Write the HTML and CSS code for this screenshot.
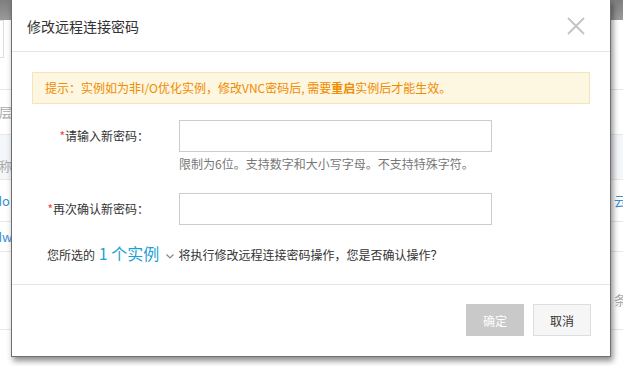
FILE: index.html
```html
<!DOCTYPE html>
<html>
<head lang="zh-CN">
    <meta charset="UTF-8">
    <title>修改远程连接密码</title>
    <link rel="stylesheet" href="styles.css">
</head>
<body>
<div class="page">
    <div class="topbar"></div>
    <div class="toolbar"><div class="searchbox"></div></div>
    <div class="row r1"><span class="cell gray">制层</span></div>
    <div class="row thead"><span class="cell gray">名称</span></div>
    <div class="row r3"><span class="cell blue">odo</span><span class="cell-r blue">云</span></div>
    <div class="row r4"><span class="cell blue">odw</span></div>
    <div class="row r5"><span class="cell-r gray">条</span></div>
</div>

<div class="modal">
    <div class="modal-hd">
        <h3 class="modal-title">修改远程连接密码</h3>
        <svg class="close" width="18" height="18" viewBox="0 0 18 18">
            <path d="M1 1L17 17M17 1L1 17" stroke="#c4c4c4" stroke-width="2" fill="none"/>
        </svg>
    </div>
    <div class="modal-bd">
        <div class="alert">提示：实例如为非I/O优化实例，修改VNC密码后, 需要<b>重启</b>实例后才能生效。</div>
        <div class="frow">
            <label class="flabel" for="pwd"><i>*</i>请输入新密码：</label>
            <input class="finput" type="password" id="pwd"/>
            <p class="fhelp">限制为6位。支持数字和大小写字母。不支持特殊字符。</p>
        </div>
        <div class="frow frow2">
            <label class="flabel" for="pwd2"><i>*</i>再次确认新密码：</label>
            <input class="finput" type="password" id="pwd2"/>
        </div>
        <p class="confirm">您所选的 <a class="num">1 个实例</a>
            <svg class="arrow" width="8" height="5" viewBox="0 0 8 5"><path d="M0.5 0.5L4 4L7.5 0.5" stroke="#888" stroke-width="1.2" fill="none"/></svg>
            将执行修改远程连接密码操作，您是否确认操作？</p>
    </div>
    <div class="modal-ft">
        <button class="btn btn-ok">确定</button>
        <button class="btn btn-cancel">取消</button>
    </div>
</div>
</body>
</html>
```

FILE: styles.css
```css
*{margin:0;padding:0;box-sizing:border-box;}
body{width:623px;height:366px;overflow:hidden;position:relative;background:#fff;color:#333;font:12px/16px "Noto Sans CJK SC","Liberation Sans",sans-serif;}

/* 背景页面 */
.page{width:623px;}
.topbar{height:20px;background:linear-gradient(#7e7e7e,#9a9a9a);}
.toolbar{height:70px;border-bottom:1px solid #e6e6e6;}
.searchbox{width:4px;height:38px;border:1px solid #ddd;border-left:0;}
.row{border-bottom:1px solid #e8e8e8;display:flex;align-items:center;justify-content:space-between;}
.r1{height:45px;}
.thead{height:45px;background:#f4f7fa;align-items:flex-end;padding-bottom:5px;}
.r3{height:42px;}
.r4{height:30px;}
.r5{height:78px;align-items:flex-start;padding-top:40px;}
.cell{margin-left:-14px;font-size:13px;}
.cell-r{margin-left:auto;margin-right:-4px;font-size:13px;}
.gray{color:#aaa;}
.blue{color:#3d8fd1;}

/* 弹窗 */
.modal{position:absolute;left:11px;top:-1px;width:600px;height:358px;background:#fff;border:1px solid #6f6f6f;box-shadow:2px 4px 6px rgba(0,0,0,.45);display:flex;flex-direction:column;}
.modal-hd{height:52px;flex:none;border-bottom:1px solid #e5e5e5;display:flex;align-items:center;justify-content:space-between;padding:0 25px 0 15px;}
.modal-title{font-size:14px;font-weight:normal;color:#333;line-height:20px;}
.close{display:block;margin-top:1px;}
.modal-bd{height:232px;flex:none;padding:20px 20px 0;}
.alert{height:32px;line-height:30px;border:1px solid #f8e3b6;background:#fdf6e1;color:#f08c00;padding-left:12px;white-space:nowrap;}
.alert b{font-weight:bold;}
.frow{display:grid;grid-template-columns:117px 313px;column-gap:30px;align-items:center;margin-top:16px;}
.frow2{margin-top:21px;}
.flabel{text-align:right;white-space:nowrap;color:#333;}
.flabel i{font-style:normal;color:#f04134;}
.finput{height:32px;border:1px solid #ccc;outline:none;background:#fff;}
.fhelp{grid-column:2;margin-top:4px;color:#777;white-space:nowrap;}
.confirm{margin-top:18px;padding-left:15px;line-height:20px;color:#333;white-space:nowrap;}
.num{font-size:16px;color:#1e9fd6;margin:0 1px;}
.arrow{margin:0 2px 0 3px;vertical-align:middle;}
.modal-ft{flex:1;border-top:1px solid #e5e5e5;display:flex;justify-content:flex-end;align-items:flex-start;gap:9px;padding:19px 19px 0;}
.btn{width:58px;height:32px;font:12px "Noto Sans CJK SC",sans-serif;cursor:pointer;}
.btn-ok{background:#c9c9c9;color:#fff;border:0;}
.btn-cancel{background:#f6f6f6;color:#333;border:1px solid #ddd;}
```
